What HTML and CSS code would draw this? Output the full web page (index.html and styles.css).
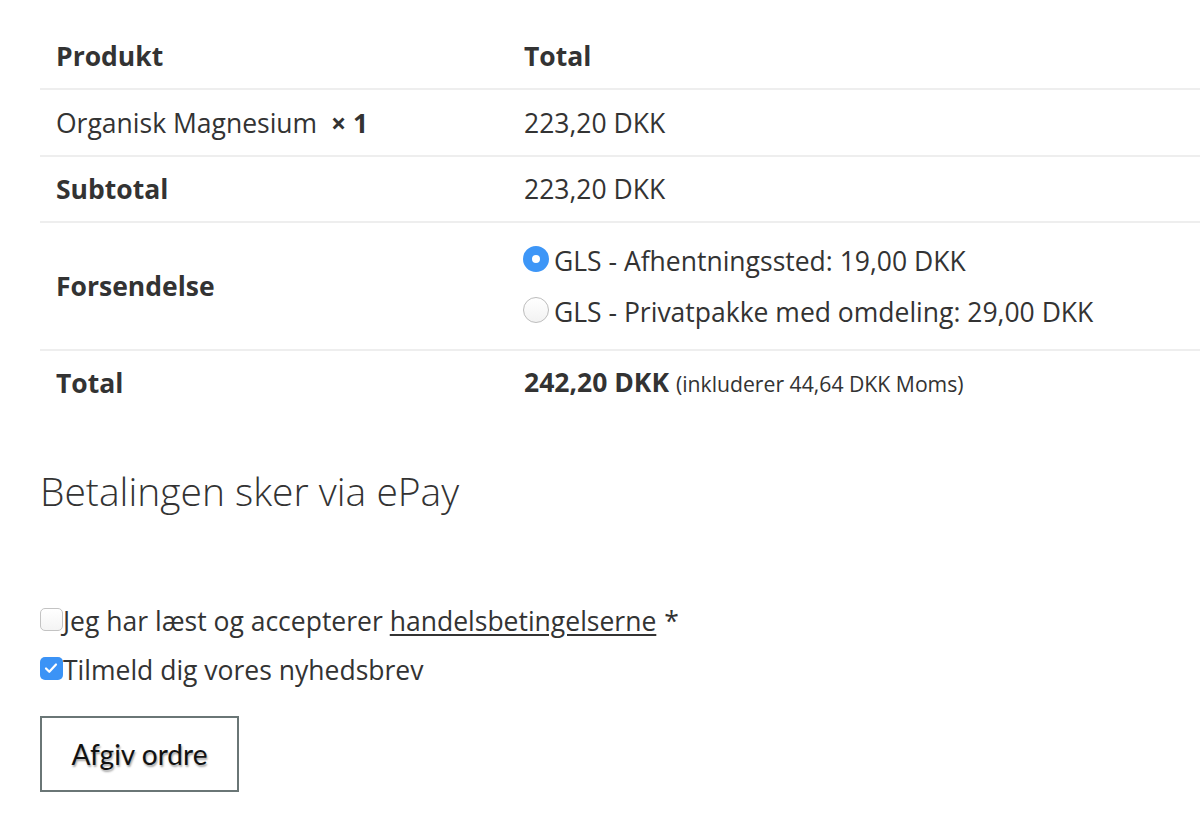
FILE: index.html
```html
<!DOCTYPE html>
<html lang="da">
<head>
<meta charset="utf-8">
<title>Kasse</title>
<link rel="stylesheet" href="styles.css">
</head>
<body>
<div class="page">
  <table class="order">
    <thead>
      <tr><th class="col1">Produkt</th><th class="col2">Total</th></tr>
    </thead>
    <tbody>
      <tr class="item"><td>Organisk Magnesium&nbsp; <strong class="qty">× 1</strong></td><td>223,20 DKK</td></tr>
      <tr class="sub"><th>Subtotal</th><td>223,20 DKK</td></tr>
      <tr class="ship">
        <th>Forsendelse</th>
        <td>
          <ul class="methods">
            <li><span class="radio checked"></span>GLS - Afhentningssted: 19,00 DKK</li>
            <li><span class="radio"></span>GLS - Privatpakke med omdeling: 29,00 DKK</li>
          </ul>
        </td>
      </tr>
      <tr class="total"><th>Total</th><td><strong>242,20 DKK</strong> <small>(inkluderer 44,64 DKK Moms)</small></td></tr>
    </tbody>
  </table>

  <h3 class="pay">Betalingen sker via ePay</h3>

  <div class="terms">
    <label class="check"><span class="box"></span>Jeg har læst og accepterer <a href="#">handelsbetingelserne</a> *</label>
    <label class="check"><span class="box on"><svg viewBox="0 0 22 22" width="22" height="22"><path d="M6 11.5l3.3 3.3L16 7.5" fill="none" stroke="#fff" stroke-width="2.2" stroke-linecap="round" stroke-linejoin="round"/></svg></span>Tilmeld dig vores nyhedsbrev</label>
  </div>

  <button class="place" type="button">Afgiv ordre</button>
</div>
</body>
</html>
```

FILE: styles.css
```css
html, body {
  margin: 0;
  padding: 0;
  background: #fff;
}
body {
  font-family: "Open Sans", "DejaVu Sans", sans-serif;
  color: #333;
  font-size: 26.5px;
}
.page {
  padding: 22px 0 0 40px;
}
.order {
  width: 1160px;
  border-collapse: collapse;
  table-layout: fixed;
}
.order th, .order td {
  box-sizing: border-box;
  text-align: left;
  vertical-align: middle;
  padding: 14px 16px 13px;
  line-height: 38px;
  border-bottom: 2px solid #eee;
}
.order thead th {
  padding-top: 15px;
  padding-bottom: 13px;
}
.order th {
  font-weight: 700;
}
.col1 { width: 468px; }
.qty { font-weight: 700; }
.order tr.sub th, .order tr.sub td {
  padding-top: 13px;
  padding-bottom: 13px;
}
.order tr.total th, .order tr.total td {
  border-bottom: none;
  padding-top: 12px;
  padding-bottom: 12px;
}
.order tr.ship th, .order tr.ship td {
  padding-top: 12px;
  padding-bottom: 12px;
}
.methods {
  list-style: none;
  margin: 0;
  padding: 0;
}
.methods li {
  display: flex;
  align-items: center;
  height: 51px;
}
.radio {
  width: 26px;
  height: 26px;
  border-radius: 50%;
  border: 1px solid #bdbdbd;
  background: linear-gradient(#fff, #f2f2f2);
  box-sizing: border-box;
  margin: 0 5px 4px -1px;
  flex: none;
}
.radio.checked {
  border: 9px solid #3d96f7;
  background: #fff;
}
.total strong {
  font-weight: 700;
}
.total small {
  font-size: 21.2px;
}
.pay {
  font-weight: 300;
  font-size: 39px;
  line-height: 50px;
  margin: 51px 0 0 0;
  color: #333;
}
.terms {
  margin-top: 80px;
}
.check {
  display: flex;
  align-items: center;
  height: 49px;
  line-height: 40px;
}
.check a {
  color: #333;
  text-decoration: underline;
  text-underline-offset: 3px;
  margin: 0 8px 0 7px;
}
.box {
  width: 23px;
  height: 23px;
  box-sizing: border-box;
  border: 1px solid #c3c3c3;
  border-radius: 5px;
  background: linear-gradient(#fff, #f4f4f4);
  margin: 0 0 3px 0;
  flex: none;
  display: flex;
}
.box.on {
  border: none;
  background: #3b93f6;
}
.place {
  margin-top: 22px;
  width: 199px;
  height: 76px;
  border: 2px solid #6a7676;
  background: #fff;
  font-family: "Lato", "Open Sans", sans-serif;
  font-size: 28px;
  color: #111;
  text-shadow: 1px 2px 2px rgba(0,0,0,0.35);
  padding: 0;
  cursor: pointer;
}
```
